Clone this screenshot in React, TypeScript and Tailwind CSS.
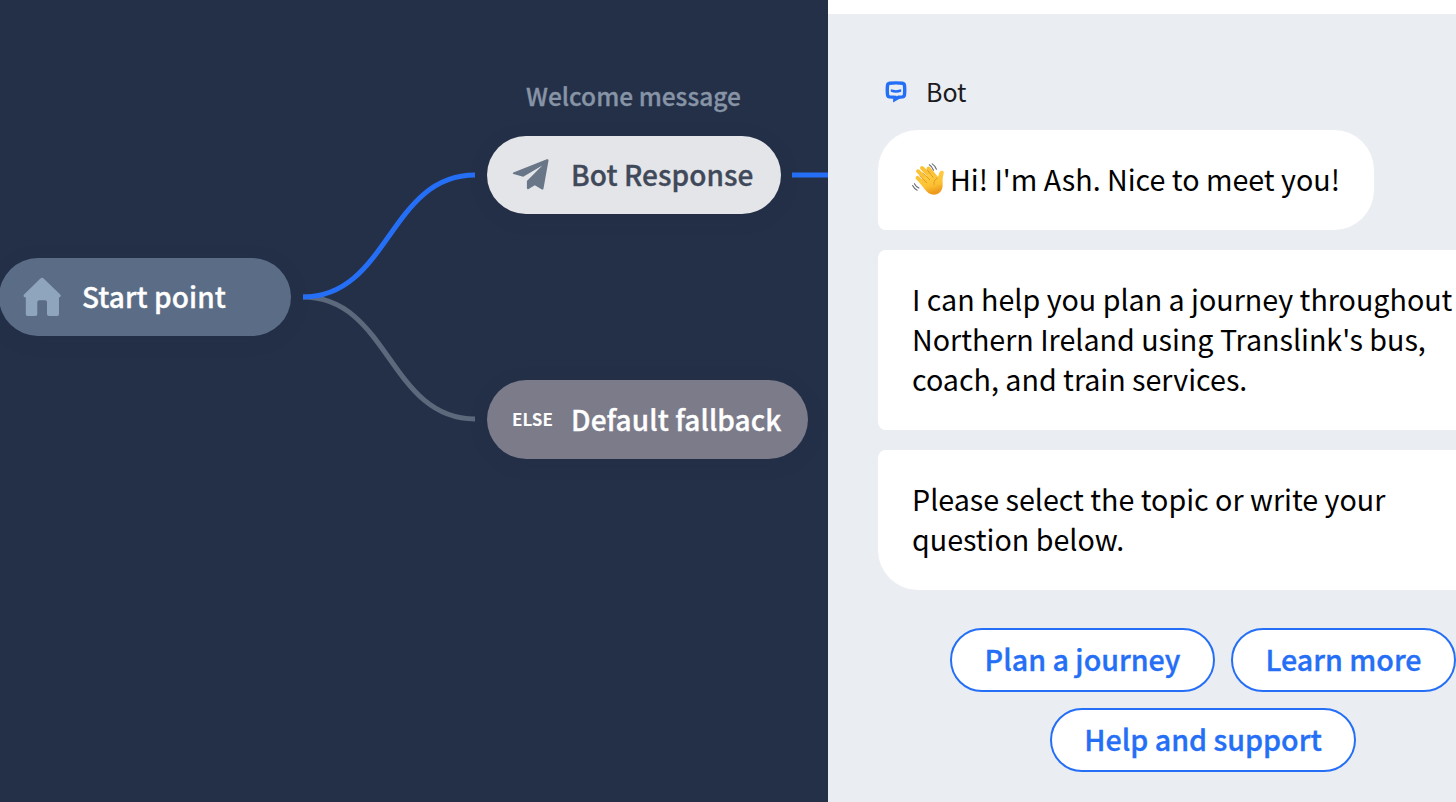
import React from "react";

interface NodeProps {
  className: string;
  icon: React.ReactNode;
  label: string;
}

const FlowNode: React.FC<NodeProps> = (props) => {
  return (
    <div
      className={
        "absolute flex items-center rounded-full text-[28px] font-medium whitespace-nowrap shadow-[0_4px_20px_rgba(30,35,65,0.12)] " +
        props.className
      }
    >
      <span className="flex w-[59px] shrink-0 items-center">{props.icon}</span>
      <span className="mb-[2px] tracking-[0.07px] [-webkit-text-stroke:0.35px_currentColor]">{props.label}</span>
    </div>
  );
};

const HomeIcon = () => (
  <svg width="38" height="40" viewBox="0 0 38 40" fill="#8fa4bd">
    <path d="M17.4 1.6a2.3 2.3 0 0 1 3.2 0L37 17.2c1.5 1.5.7 3.1-1 3.1V37c0 1.3-.6 2-1.9 2h-8c-1.3 0-2.1-.7-2.1-2V25.5c0-1.5-.7-2.2-2-2.2h-5.5c-1.3 0-2.2.7-2.2 2.2V37c0 1.3-.7 2-2 2h-7.5c-1.3 0-2-.7-2-2V20.3c-2 0-3-1.6-1.5-3.1z" />
  </svg>
);

const PlaneIcon = () => (
  <svg width="38" height="34" viewBox="0 0 38 34" fill="#687687">
    <path d="M1.4 14.4 34.8 1.3c1-.4 1.8.2 1.7 1.2L31.5 30.4c-.2 1.2-1 1.5-2 .9l-6.700-4-6.200 3.600c-1 .6-1.700.2-1.700-.8v-7.200L30.300 7.400 11.200 18.800 1.500 16c-.9-.3-1-1.200-.1-1.600z" />
  </svg>
);

const BotIcon = () => (
  <svg width="22" height="22" viewBox="0 0 22 22">
    <path
      d="M4.700 2.300c4.200-.6 8.400-.6 12.600 0 1.300.2 2.100 1 2.200 2.300.3 3 .3 6 0 9-.1 1.300-.9 2.100-2.200 2.300l-3.700.3-3.800 2.300v-2.200l-5.100-.4c-1.300-.2-2.100-1-2.200-2.300-.3-3-.3-6 0-9 .1-1.300.9-2.100 2.200-2.300z"
      fill="none"
      stroke="#256ff6"
      strokeWidth="3.4"
    />
    <path d="M5.800 8.300c3.400 1.100 7 1.100 10.400 0v2.400c-3.300 1.400-7.100 1.400-10.400 0z" fill="#256ff6" />
  </svg>
);

const WaveIcon = () => (
  <svg className="shrink-0" width="34" height="34" viewBox="0 0 34 34">
    <defs>
      <linearGradient id="skin" x1="0" y1="0" x2="0.3" y2="1">
        <stop offset="0" stopColor="#ffd24a" />
        <stop offset="0.7" stopColor="#fcc133" />
        <stop offset="1" stopColor="#ee9a1d" />
      </linearGradient>
    </defs>
    <g fill="none" strokeLinecap="round" stroke="#fbc235" strokeWidth="3.9">
      <path d="M6.500 14.800 15 23M7 8.200 17 18M11 5 21 15M17.500 5.500 25 14.500" />
    </g>
    <path
      d="M8 19 13.500 26c2.500 3.500 5.500 5.700 9.500 5.700 4.900 0 8.200-3.700 8.600-8.500.4-4.100-.6-7 .7-11 .7-2.300.9-3.900-.8-4.400-2.100-.6-3.500 1.300-4 4.400L26.500 15 20 10l-8 5z"
      fill="url(#skin)"
    />
    <path
      d="m8.800 13 6.800 6.600M12 9.900l6.700 6.800M16.200 6.900l6 7.500M26.500 15c-2.700 1.500-4 3.700-3.500 6.500"
      stroke="#dc9420"
      strokeWidth="0.9"
      fill="none"
      strokeLinecap="round"
    />
    <path
      d="M18.300 1.800c1.700.9 3.200 2.900 4.200 5.400M21.200.9c1.700 1 3.200 2.900 4.200 5.300M1.600 22.500c1 2 2.500 3.700 4.600 4.700M3.400 20.700c1 1.900 2.500 3.400 4.500 4.400"
      stroke="#676b70"
      strokeWidth="1.1"
      fill="none"
      strokeLinecap="round"
    />
  </svg>
);

const FlowCanvas = () => {
  return (
    <div className="relative h-full w-[828px] shrink-0 overflow-hidden bg-[#243048]">
      <svg className="absolute inset-0" width="828" height="802" fill="none" strokeWidth="5">
        <path d="M303 297C389 297 389 419 475 419" stroke="#5c687b" />
        <path d="M303 297C389 297 389 175 475 175" stroke="#256ff6" />
        <path d="M792 175H828" stroke="#256ff6" />
      </svg>
      <p className="absolute top-[78px] left-[526px] text-[24.5px] leading-[36px] font-medium whitespace-nowrap text-[#8794a6] [-webkit-text-stroke:0.3px_currentColor]">
        Welcome message
      </p>
      <FlowNode
        className="top-[258px] left-[-1px] h-[78px] w-[292px] bg-[#5b6d86] pl-6 text-white"
        icon={<HomeIcon />}
        label="Start point"
      />
      <FlowNode
        className="top-[136px] left-[487px] h-[78px] w-[294px] bg-[#e4e5e9] pl-[25px] text-[#3f4959]"
        icon={<PlaneIcon />}
        label="Bot Response"
      />
      <FlowNode
        className="top-[380px] left-[487px] h-[79px] w-[321px] bg-[#7b7b8a] pl-[25px] text-white"
        icon={<span className="mb-[2px] text-[17px] font-bold">ELSE</span>}
        label="Default fallback"
      />
    </div>
  );
};

const ChatPreview = () => {
  return (
    <div className="flex h-full min-w-0 flex-1 flex-col overflow-hidden border-t-[14px] border-white bg-[#eaedf2] pl-[50px] text-black">
      <div className="mt-[58px] flex h-10 items-center pl-[7px]">
        <BotIcon />
        <span className="ml-[19px] text-[25px] text-[#1b1b20]">Bot</span>
      </div>
      <div className="mt-[18px] flex w-[640px] flex-col items-start gap-5 text-[28.65px] leading-10 whitespace-nowrap">
        <div className="flex h-[100px] w-[496px] items-center rounded-[40px] rounded-bl-[8px] bg-white pl-[33px]">
          <WaveIcon />
          <span className="mb-[2px] ml-[5px]">Hi! I'm Ash. Nice to meet you!</span>
        </div>
        <div className="w-full rounded-l-[8px] bg-white pt-[29px] pb-[31px] pl-[34px]">
          <p>I can help you plan a journey throughout</p>
          <p>Northern Ireland using Translink's bus,</p>
          <p>coach, and train services.</p>
        </div>
        <div className="w-full rounded-tl-[8px] rounded-bl-[40px] bg-white pt-[29px] pb-[31px] pl-[34px]">
          <p>Please select the topic or write your</p>
          <p>question below.</p>
        </div>
      </div>
      <div className="mt-[38px] ml-[72px] flex w-[506px] flex-wrap justify-center gap-4 text-[28.65px] font-medium whitespace-nowrap text-[#256ff6] [-webkit-text-stroke:0.35px_currentColor]">
        <button className="h-16 w-[265px] rounded-full border-2 border-[#256ff6] bg-white pb-[2px]">Plan a journey</button>
        <button className="h-16 w-[225px] rounded-full border-2 border-[#256ff6] bg-white pb-[2px]">Learn more</button>
        <button className="h-16 w-[306px] rounded-full border-2 border-[#256ff6] bg-white pb-[2px]">Help and support</button>
      </div>
    </div>
  );
};

const App: React.FC = () => {
  return (
    <div className="flex h-[802px] w-[1456px] overflow-hidden font-['Noto_Sans_CJK_SC',sans-serif]">
      <FlowCanvas />
      <ChatPreview />
    </div>
  );
};

export default App;
